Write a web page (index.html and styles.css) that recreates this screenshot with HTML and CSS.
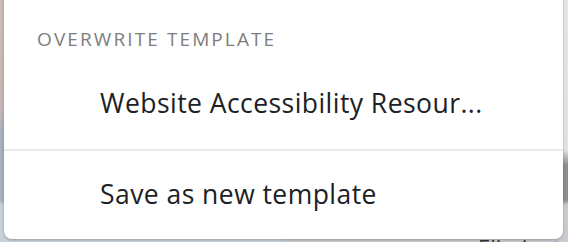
FILE: index.html
```html
<!DOCTYPE html>
<html lang="en">
<head>
    <meta charset="UTF-8">
    <title>Template menu</title>
    <link rel="stylesheet" href="styles.css">
</head>
<body>
    <div class="backdrop">
        <div class="menu">
            <div class="menu-title">OVERWRITE TEMPLATE</div>
            <div class="menu-item first">Website Accessibility Resour...</div>
            <div class="menu-divider"></div>
            <div class="menu-item last">Save as new template</div>
        </div>
        <div class="behind-text">Eliminat</div>
    </div>
</body>
</html>
```

FILE: styles.css
```css
html, body {
    margin: 0;
    height: 100%;
    overflow: hidden;
}
body {
    font-family: "Open Sans", Roboto, sans-serif;
    background:
        linear-gradient(#cdbdb8 0, #c4b6b4 110px, #a8b0ba 130px, #a8b0ba 200px, #c8d0d8 205px) left top / 50% 100% no-repeat,
        linear-gradient(#e6e6e6 0, #e2e2e2 150px, #8e8e90 165px, #8e8e90 200px, #c8ccd0 205px) right top / 50% 100% no-repeat;
}
.backdrop {
    position: relative;
    height: 100%;
    overflow: hidden;
}
.menu {
    position: relative;
    z-index: 1;
    margin: -8px 0 0 4px;
    width: 559px;
    height: 247px;
    background-color: white;
    border-radius: 8px;
    box-shadow: 0 1px 3px rgba(0,0,0,0.25);
    box-sizing: border-box;
}
.menu-title {
    padding: 36px 0 0 33px;
    font-size: 19px;
    line-height: 22px;
    letter-spacing: 2.1px;
    color: #7d7d7d;
}
.menu-item {
    padding-left: 96px;
    font-size: 26.5px;
    line-height: 32px;
    letter-spacing: 0.45px;
    color: #202124;
}
.menu-item.first {
    padding-top: 37px;
    padding-bottom: 30px;
}
.menu-item.last {
    padding-top: 27px;
}
.menu-divider {
    height: 2px;
    background-color: #ebebeb;
}
.behind-text {
    position: absolute;
    left: 478px;
    top: 234px;
    font-size: 22px;
    line-height: 26px;
    color: #333;
}
```
